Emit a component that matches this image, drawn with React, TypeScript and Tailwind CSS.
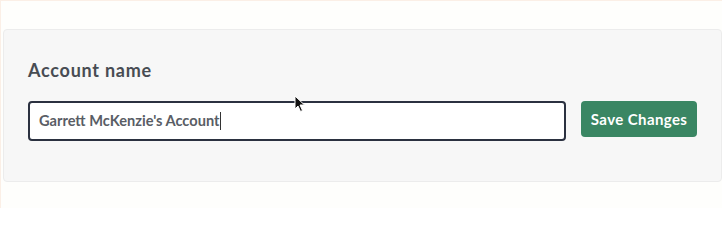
import React from "react";

const Pointer = () => (
  <svg
    className="absolute left-[293px] top-[94px]"
    width="12"
    height="18"
    viewBox="0 0 12 18"
  >
    <path
      d="M1 1 L1 14 L4 11 L6.5 16.5 L8.5 15.5 L6 10 L10.5 10 Z"
      fill="#111"
      stroke="#fff"
      strokeWidth="1"
      strokeLinejoin="round"
    />
  </svg>
);

const App = () => {
  return (
    <div
      className="relative h-[208px] w-[722px] bg-[#fefefc] border-t border-l border-[#fbefe6] pl-[2px] pt-[28px]"
      style={{ fontFamily: "Lato, 'Open Sans', sans-serif" }}
    >
      <div className="h-[153px] w-[719px] rounded-[4px] border border-[#ececec] bg-[#f7f7f7] px-6 pt-[28px]">
        <h2 className="text-[18px] font-bold leading-[24px] tracking-[0.75px] text-[#484c53]">Account name</h2>
        <div className="mt-[19px] flex items-start gap-[15px]">
          <div className="flex h-[40px] w-[539px] items-center rounded-[4px] border-2 border-[#2b3140] bg-white px-[9px]">
            <span className="text-[14.6px] font-bold text-[#595d65]">Garrett McKenzie's Account</span>
            <span className="ml-[1px] h-[18px] w-px bg-[#333]" />
          </div>
          <button className="h-[36px] w-[116px] rounded-[4px] bg-[#3a8663] text-[15px] font-bold tracking-[0.4px] text-white">
            Save Changes
          </button>
        </div>
      </div>
      <Pointer />
    </div>
  );
};

export default App;
